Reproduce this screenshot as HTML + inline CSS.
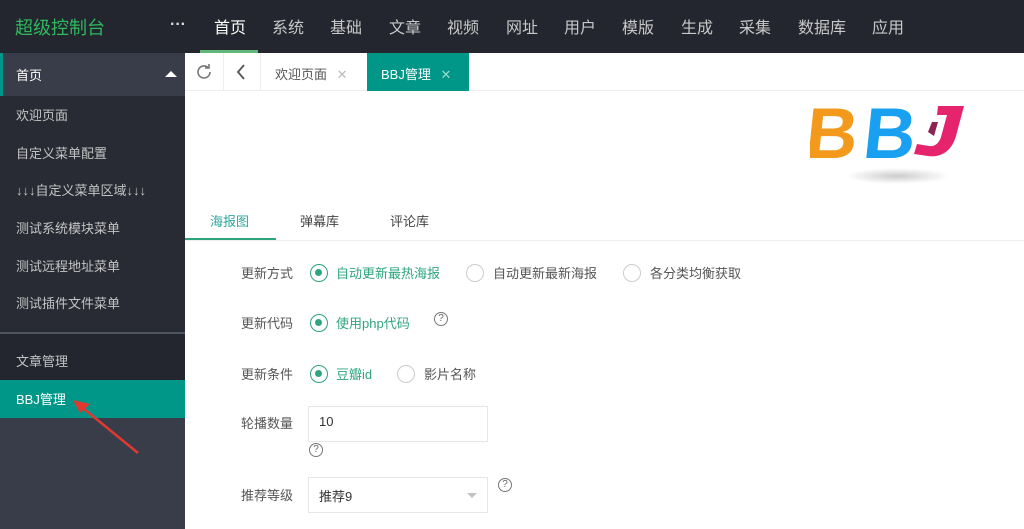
<!DOCTYPE html>
<html><head><meta charset="utf-8"><style>
*{margin:0;padding:0;box-sizing:border-box}
body{width:1024px;height:529px;overflow:hidden;background:#fff;font-family:"Liberation Sans","Noto Sans CJK SC",sans-serif;position:relative}
.a{position:absolute;white-space:nowrap}
.top{left:0;top:0;width:1024px;height:53px;background:#23262e}
.nav{top:14px;font-size:16px;color:#c8c8c8}
.side{left:0;top:53px;width:185px;height:476px;background:#282b33}
.si{left:16px;font-size:13px;color:#c4c4c4}
.lbl{font-size:13px;color:#555;left:241px}
.rad{width:18px;height:18px;border:1.5px solid #ccc;border-radius:50%}
.rad.on{border-color:#2fa57c}
.rad.on::after{content:"";position:absolute;left:4px;top:4px;width:7px;height:7px;border-radius:50%;background:#2fa57c}
.rt{font-size:13px;color:#555}
.g{color:#2fa57c}
.q{width:14px;height:14px;border:1px solid #777;border-radius:50%;font-size:10px;color:#666;text-align:center;line-height:12px}
</style></head><body>
<div class="a top"></div>
<div class="a" style="left:15px;top:14px;font-size:18px;color:#2fb85f">超级控制台</div>
<div class="a" style="left:170px;top:16px;font-size:16px;color:#ddd;font-weight:bold">···</div>
<div class="a nav" style="left:214px;color:#fff">首页</div>
<div class="a" style="left:200px;top:50px;width:58px;height:3px;background:#5fb878"></div>
<div class="a nav" style="left:272px">系统</div>
<div class="a nav" style="left:330px">基础</div>
<div class="a nav" style="left:389px">文章</div>
<div class="a nav" style="left:447px">视频</div>
<div class="a nav" style="left:506px">网址</div>
<div class="a nav" style="left:564px">用户</div>
<div class="a nav" style="left:622px">模版</div>
<div class="a nav" style="left:681px">生成</div>
<div class="a nav" style="left:739px">采集</div>
<div class="a nav" style="left:798px">数据库</div>
<div class="a nav" style="left:872px">应用</div>

<div class="a side"></div>
<div class="a" style="left:0;top:53px;width:185px;height:43px;background:#393d49"></div>
<div class="a" style="left:0;top:53px;width:3px;height:43px;background:#009688"></div>
<div class="a si" style="top:65px;color:#fff">首页</div>
<div class="a" style="left:165px;top:71px;width:0;height:0;border-left:6px solid transparent;border-right:6px solid transparent;border-bottom:6px solid #fff"></div>
<div class="a si" style="top:105px">欢迎页面</div>
<div class="a si" style="top:143px">自定义菜单配置</div>
<div class="a si" style="top:180px">↓↓↓自定义菜单区域↓↓↓</div>
<div class="a si" style="top:218px">测试系统模块菜单</div>
<div class="a si" style="top:256px">测试远程地址菜单</div>
<div class="a si" style="top:293px">测试插件文件菜单</div>
<div class="a" style="left:0;top:332px;width:185px;height:2px;background:#50545e"></div>
<div class="a" style="left:0;top:334px;width:185px;height:46px;background:#23262e"></div>
<div class="a si" style="top:351px">文章管理</div>
<div class="a" style="left:0;top:380px;width:185px;height:38px;background:#009688"></div>
<div class="a si" style="top:389px;color:#fff">BBJ管理</div>
<div class="a" style="left:0;top:418px;width:185px;height:111px;background:#393d49"></div>
<svg class="a" style="left:70px;top:398px" width="75" height="60"><line x1="68" y1="55" x2="8" y2="6" stroke="#e03a30" stroke-width="2.5"/><polygon points="3,2 20,6 10,15" fill="#e03a30"/></svg>

<div class="a" style="left:185px;top:53px;width:839px;height:38px;border-bottom:1px solid #eee"></div>
<div class="a" style="left:223px;top:53px;width:1px;height:38px;background:#eee"></div>
<div class="a" style="left:260px;top:53px;width:1px;height:38px;background:#eee"></div>
<svg class="a" style="left:194px;top:62px" width="20" height="20" viewBox="0 0 20 20"><path d="M16 10a6 6 0 1 1-2-4.5" fill="none" stroke="#777" stroke-width="1.6"/><path d="M15 2v4h-4" fill="none" stroke="#777" stroke-width="1.6"/></svg>
<svg class="a" style="left:235px;top:63px" width="12" height="18"><path d="M9 2L3 9l6 7" fill="none" stroke="#555" stroke-width="1.8"/></svg>
<div class="a" style="left:275px;top:64px;font-size:13px;color:#555">欢迎页面 <span style="color:#bbb;margin-left:6px">✕</span></div>
<div class="a" style="left:367px;top:53px;width:102px;height:38px;background:#009688"></div>
<div class="a" style="left:381px;top:64px;font-size:13px;color:#fff">BBJ管理 <span style="color:#9fd8d0;margin-left:6px">✕</span></div>

<div class="a" style="left:845px;top:168px;width:105px;height:16px;border-radius:50%;background:radial-gradient(#ccc,rgba(255,255,255,0) 70%)"></div>
<svg class="a" style="left:810px;top:96px" width="160" height="70">
<text x="0" y="62" font-family="Liberation Sans" font-weight="bold" font-size="72" fill="#f39a1c" transform="skewX(-6)">B</text>
<text x="58" y="62" font-family="Liberation Sans" font-weight="bold" font-size="72" fill="#1aa0f0" transform="skewX(-6)">B</text>
<path d="M128 10h26l-8 30c-4 14-14 22-28 20l-14-2 3-10 12 2c6 1 10-3 12-9l6-22h-10z" fill="#e6246e"/>
<path d="M118 36l4-10h6l-4 14z" fill="#8b2252"/>
</svg>

<div class="a" style="left:185px;top:240px;width:839px;height:1px;background:#eee"></div>
<div class="a" style="left:210px;top:211px;font-size:13px;color:#2fa5a0">海报图</div>
<div class="a" style="left:185px;top:238px;width:91px;height:2px;background:#2fa57c"></div>
<div class="a" style="left:300px;top:211px;font-size:13px;color:#444">弹幕库</div>
<div class="a" style="left:390px;top:211px;font-size:13px;color:#444">评论库</div>

<div class="a lbl" style="top:263px">更新方式</div>
<div class="a rad on" style="left:310px;top:264px"></div><div class="a rt g" style="left:336px;top:263px">自动更新最热海报</div>
<div class="a rad" style="left:466px;top:264px"></div><div class="a rt" style="left:493px;top:263px">自动更新最新海报</div>
<div class="a rad" style="left:623px;top:264px"></div><div class="a rt" style="left:650px;top:263px">各分类均衡获取</div>

<div class="a lbl" style="top:313px">更新代码</div>
<div class="a rad on" style="left:310px;top:314px"></div><div class="a rt g" style="left:336px;top:313px">使用php代码</div>
<div class="a q" style="left:434px;top:312px">?</div>

<div class="a lbl" style="top:364px">更新条件</div>
<div class="a rad on" style="left:310px;top:365px"></div><div class="a rt g" style="left:336px;top:364px">豆瓣id</div>
<div class="a rad" style="left:397px;top:365px"></div><div class="a rt" style="left:424px;top:364px">影片名称</div>

<div class="a lbl" style="top:413px">轮播数量</div>
<div class="a" style="left:308px;top:406px;width:180px;height:36px;border:1px solid #e6e6e6"></div>
<div class="a rt" style="left:319px;top:414px;color:#333">10</div>
<div class="a q" style="left:309px;top:443px">?</div>

<div class="a lbl" style="top:485px">推荐等级</div>
<div class="a" style="left:308px;top:477px;width:180px;height:36px;border:1px solid #e6e6e6"></div>
<div class="a rt" style="left:319px;top:486px;color:#333">推荐9</div>
<div class="a" style="left:467px;top:493px;width:0;height:0;border-left:5px solid transparent;border-right:5px solid transparent;border-top:5px solid #c2c2c2"></div>
<div class="a q" style="left:498px;top:478px">?</div>
</body></html>
